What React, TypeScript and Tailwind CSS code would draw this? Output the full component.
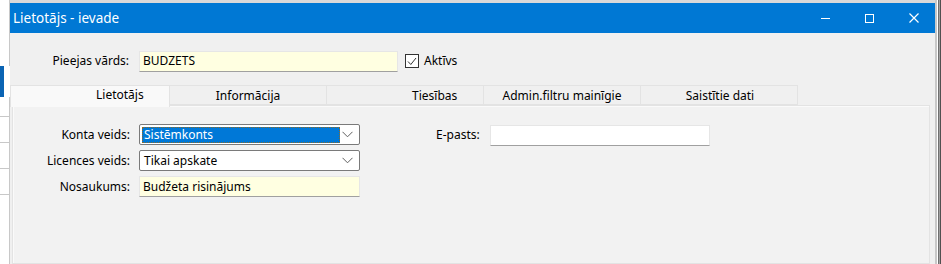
import React from 'react';

const font = { fontFamily: '"Noto Sans", "Open Sans", sans-serif' };

function Chevron() {
    return (
        <svg width="11" height="7" viewBox="0 0 11 7" className="shrink-0">
            <path d="M0.5 0.8 L5.5 5.8 L10.5 0.8" fill="none" stroke="#606060" strokeWidth="1" />
        </svg>
    );
}

function Combo({ value, selected }: { value: string; selected?: boolean }) {
    return (
        <div className="flex h-[21px] w-[221px] items-center rounded-[2px] border border-[#7a7a7a] bg-white pl-[2px] pr-[6px]">
            {selected ? (
                <div className="flex h-[16px] w-[198px] items-center border border-dotted border-[#8a6a2a] bg-[#0078d7] px-[1px] text-white">
                    {value}
                </div>
            ) : (
                <div className="w-[198px] pl-[2px] text-black">{value}</div>
            )}
            <div className="ml-auto">
                <Chevron />
            </div>
        </div>
    );
}

function TextBox({ value, yellow, width }: { value: string; yellow?: boolean; width: string }) {
    return (
        <div
            className={`flex h-[21px] ${width} items-center border border-[#e6e6e6] border-b-[#a0a0a0] pl-[3px] text-black ${
                yellow ? 'bg-[#ffffe1]' : 'bg-white'
            }`}
        >
            {value}
        </div>
    );
}

const tabs = [
    { label: 'Lietotājs', cls: 'pl-[85px]' },
    { label: 'Informācija', cls: 'justify-center' },
    { label: 'Tiesības', cls: 'pl-[85px]' },
    { label: 'Admin.filtru mainīgie', cls: 'justify-center' },
    { label: 'Saistītie dati', cls: 'justify-center pl-[2px]' },
];

export default function App() {
    return (
        <div className="flex h-[264px] w-[941px] overflow-hidden bg-white text-[12px]" style={font}>
            {/* background application peeking out on the left */}
            <div className="flex w-[10px] shrink-0 flex-col bg-white">
                <div className="h-[66px] border-r border-[#c8c8c8]" />
                <div className="h-[31px] w-[4px] bg-[#0a64b4]" />
                <div className="h-[20px] border-b border-r border-[#c8c8c8]" />
                <div className="h-[26px] border-b border-r border-[#c8c8c8]" />
                <div className="h-[26px] border-b border-r border-[#c8c8c8]" />
                <div className="h-[26px] border-b border-r border-[#c8c8c8]" />
                <div className="flex-1 border-r border-[#c8c8c8]" />
            </div>

            {/* dialog window */}
            <div className="flex w-[925px] shrink-0 flex-col">
                <div className="h-[3px] bg-[#d9d9d9]" />
                <div className="flex h-[30px] items-center bg-[#0078d4] pl-[3px] text-white">
                    <span className="text-[13.5px]">Lietotājs - ievade</span>
                    <div className="ml-auto flex h-full items-center">
                        <div className="flex w-[44px] justify-center">
                            <div className="h-[1px] w-[9px] bg-white" />
                        </div>
                        <div className="flex w-[44px] justify-center">
                            <div className="h-[9px] w-[9px] border border-white" />
                        </div>
                        <div className="flex w-[44px] justify-center pl-[2px]">
                            <svg width="10" height="10" viewBox="0 0 10 10">
                                <path d="M0.5 0.5 L9.5 9.5 M9.5 0.5 L0.5 9.5" stroke="white" strokeWidth="1.2" />
                            </svg>
                        </div>
                    </div>
                </div>

                <div className="flex flex-1 flex-col bg-[#f0f0f0]">
                    {/* login row */}
                    <div className="mt-[17px] flex h-[22px] items-center">
                        <div className="w-[119px] text-right text-black">Pieejas vārds:</div>
                        <div className="ml-[10px]">
                            <TextBox value="BUDZETS" yellow width="w-[259px]" />
                        </div>
                        <div className="ml-[7px] flex items-center gap-[5px]">
                            <div className="flex h-[14px] w-[14px] items-center justify-center border border-[#333] bg-white">
                                <svg width="10" height="9" viewBox="0 0 10 9">
                                    <path d="M1 4.5 L3.8 7.5 L9 1" fill="none" stroke="#333" strokeWidth="1" />
                                </svg>
                            </div>
                            <span className="text-black">Aktīvs</span>
                        </div>
                    </div>

                    {/* tabs */}
                    <div className="mt-[13px] flex h-[20px] items-stretch">
                        {tabs.map((t, i) => (
                            <div
                                key={t.label}
                                className={`flex items-center text-black ${t.cls} ${
                                    i === 0
                                        ? 'relative z-10 h-[22px] w-[160px] border border-b-0 border-[#e3e3e3] bg-[#f9f9f9] pb-[3px]'
                                        : 'w-[157px] border border-l-0 border-[#e3e3e3] bg-[#f0f0f0] pt-[1px]'
                                }`}
                            >
                                {t.label}
                            </div>
                        ))}
                    </div>

                    {/* tab panel */}
                    <div className="ml-[2px] mr-[5px] flex-1 border border-[#e3e3e3] bg-[#f2f2f2] shadow-[inset_1px_1px_0_#fafafa]">
                        <div className="mt-[18px] flex">
                            <div className="flex flex-col gap-[5px]">
                                <div className="flex items-center">
                                    <div className="w-[117px] text-right text-black">Konta veids:</div>
                                    <div className="ml-[9px]">
                                        <Combo value="Sistēmkonts" selected />
                                    </div>
                                </div>
                                <div className="flex items-center">
                                    <div className="w-[117px] text-right text-black">Licences veids:</div>
                                    <div className="ml-[9px]">
                                        <Combo value="Tikai apskate" />
                                    </div>
                                </div>
                                <div className="flex items-center">
                                    <div className="w-[117px] text-right text-black">Nosaukums:</div>
                                    <div className="ml-[9px]">
                                        <TextBox value="Budžeta risinājums" yellow width="w-[221px]" />
                                    </div>
                                </div>
                            </div>
                            <div className="ml-[76px] flex h-[22px] items-center">
                                <span className="text-black">E-pasts:</span>
                                <div className="ml-[10px]">
                                    <TextBox value="" width="w-[220px]" />
                                </div>
                            </div>
                        </div>
                    </div>
                </div>
            </div>

            {/* outer frame on the right */}
            <div className="flex flex-1 bg-[#f0f0f0]">
                <div className="w-[2px] bg-[#c8c8c8]" />
                <div className="w-[1px] bg-white" />
                <div className="w-[1px] bg-[#707070]" />
                <div className="w-[1px] bg-[#a0a0a0]" />
                <div className="w-[1px] bg-[#505050]" />
            </div>
        </div>
    );
}
